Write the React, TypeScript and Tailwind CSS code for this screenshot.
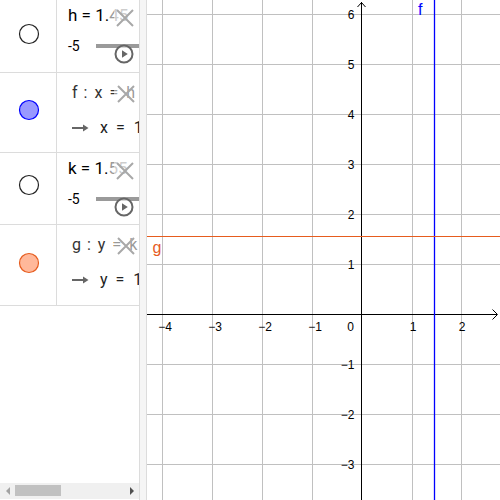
import React from "react";

const XIcon = () => (
  <svg width="20" height="20" viewBox="0 0 20 20" className="block">
    <path d="M2 2 L18 18 M18 2 L2 18" stroke="#a8a8a8" strokeWidth="2" fill="none" />
  </svg>
);

const PlayIcon = () => (
  <svg width="22" height="22" viewBox="0 0 22 22" className="block">
    <circle cx="11" cy="11" r="8.5" stroke="#666" strokeWidth="2" fill="white" fillOpacity="0.6" />
    <path d="M9 7.2 L14.8 11 L9 14.8 Z" fill="#666" />
  </svg>
);

function Marble({ fill, stroke }: { fill: string; stroke: string }) {
  return (
    <svg width="22" height="22" viewBox="0 0 22 22" className="block">
      <circle cx="11" cy="11" r="9.5" fill={fill} stroke={stroke} strokeWidth="1.2" />
    </svg>
  );
}

function SliderRow({ name, value, h, pt }: { name: string; value: string; h: string; pt: string }) {
  return (
    <div className={`flex border-b border-[#dcdcdc] ${h}`}>
      <div className={`w-[57px] shrink-0 border-r border-[#dcdcdc] flex justify-center ${pt}`}>
        <div className="ml-[1px]">
          <Marble fill="#ffffff" stroke="#222" />
        </div>
      </div>
      <div className="relative flex-1 overflow-hidden">
        <div className="pl-[11px] pt-[4px] text-[17px] leading-[23px] text-black whitespace-nowrap">
          {name} = 1.<span className="text-[#9a9a9a]">{value}</span>
        </div>
        <div className="flex items-center mt-[11px] h-[16px]">
          <div className="pl-[11px] w-[39px] shrink-0 text-[14px] leading-[16px] text-black">-5</div>
          <div className="flex-1 h-[4px] bg-[#9a9a9a]" />
        </div>
        <div className="absolute left-[57px] top-[8px] w-[25px] h-[20px] bg-white/50" />
        <div className="absolute left-[58px] top-[8px]">
          <XIcon />
        </div>
        <div className="absolute left-[56px] top-[43px]">
          <PlayIcon />
        </div>
      </div>
    </div>
  );
}

function LineRow({
  lhs,
  name,
  out,
  fill,
  stroke,
  h,
  pt,
}: {
  lhs: string;
  name: string;
  out: string;
  fill: string;
  stroke: string;
  h: string;
  pt: string;
}) {
  return (
    <div className={`flex border-b border-[#dcdcdc] ${h}`}>
      <div className={`w-[57px] shrink-0 border-r border-[#dcdcdc] flex justify-center ${pt}`}>
        <div className="ml-[1px]">
          <Marble fill={fill} stroke={stroke} />
        </div>
      </div>
      <div className="relative flex-1 overflow-hidden">
        <div className="pl-[15px] pt-[10px] text-[16px] leading-[20px] text-[#333] whitespace-nowrap">
          {name}
          <span className="ml-[6px]">:</span>
          <span className="ml-[7px]">{lhs}</span>
          <span className="ml-[7px]">=</span>
          <span className="ml-[8px]">{name === "f" ? "h" : "k"}</span>
        </div>
        <div className="flex items-center pl-[15px] mt-[15px] whitespace-nowrap">
          <svg width="17" height="8" viewBox="0 0 17 8" className="block shrink-0">
            <path d="M0 4 H13" stroke="#666" strokeWidth="2" />
            <path d="M11 0.5 L16.5 4 L11 7.5 Z" fill="#666" />
          </svg>
          <span className="ml-[11px] shrink-0 text-[16px] leading-[20px] text-[#222]">
            {lhs}
            <span className="ml-[8px]">=</span>
            <span className="ml-[9px]">{out}</span>
          </span>
        </div>
        <div className="absolute left-[57px] top-[10px] w-[25px] h-[20px] bg-white/50" />
        <div className="absolute left-[59px] top-[11px]">
          <XIcon />
        </div>
      </div>
    </div>
  );
}

function Graph() {
  const vx = [15, 65, 115, 165, 265, 314];
  const hy = [14, 64, 114, 164, 214, 264, 364, 414, 464];
  const xl: [number, string][] = [
    [18, "\u22124"],
    [68, "\u22123"],
    [118, "\u22122"],
    [168, "\u22121"],
    [266, "1"],
    [315, "2"],
  ];
  const yl: [number, string][] = [
    [14, "6"],
    [64, "5"],
    [114, "4"],
    [164, "3"],
    [214, "2"],
    [264, "1"],
    [364, "\u22121"],
    [414, "\u22122"],
    [464, "\u22123"],
  ];
  return (
    <svg width="353" height="500" viewBox="0 0 353 500" className="block">
      <rect width="353" height="500" fill="white" />
      {vx.map((x) => (
        <line key={"v" + x} x1={x + 0.5} y1={0} x2={x + 0.5} y2={500} stroke="#c0c0c0" strokeWidth="1" />
      ))}
      {hy.map((y) => (
        <line key={"h" + y} x1={0} y1={y + 0.5} x2={353} y2={y + 0.5} stroke="#c0c0c0" strokeWidth="1" />
      ))}
      <line x1={0} y1={314.5} x2={350} y2={314.5} stroke="#000" strokeWidth="1" />
      <line x1={214.5} y1={2} x2={214.5} y2={500} stroke="#000" strokeWidth="1" />
      <polyline points="345.5,309.5 350.5,314.5 345.5,319.5" fill="none" stroke="#000" strokeWidth="1" />
      <polyline points="210.5,7 214.5,2.5 218.5,7" fill="none" stroke="#000" strokeWidth="1" />
      <line x1={287.5} y1={0} x2={287.5} y2={500} stroke="#0000ff" strokeWidth="1.3" />
      <line x1={0} y1={236.5} x2={353} y2={236.5} stroke="#e65c1e" strokeWidth="1" />
      <g fontFamily="'Liberation Sans', Arial, sans-serif" fontSize="12" fill="#000">
        {xl.map(([x, t]) => (
          <text key={"xl" + t} x={x} y={331} textAnchor="middle">
            {t}
          </text>
        ))}
        <text x={207} y={331} textAnchor="end">
          0
        </text>
        {yl.map(([y, t]) => (
          <text key={"yl" + t} x={207.5} y={y + 4.8} textAnchor="end">
            {t}
          </text>
        ))}
      </g>
      <text x={271} y={15} fontFamily="'Liberation Sans', Arial, sans-serif" fontSize="16" fill="#0000ff">
        f
      </text>
      <text x={5.5} y={252.5} fontFamily="'Liberation Sans', Arial, sans-serif" fontSize="16" fill="#e65c1e">
        g
      </text>
    </svg>
  );
}

export default function App() {
  return (
    <div className="w-[500px] h-[500px] flex bg-white overflow-hidden font-['Roboto',sans-serif]">
      <div className="w-[140px] h-full shrink-0 flex flex-col border-r border-[#dcdcdc]">
        <SliderRow name="h" value="45" h="h-[73px]" pt="pt-[23px]" />
        <LineRow lhs="x" name="f" out="1.45" fill="#9999ff" stroke="#0000ff" h="h-[80px]" pt="pt-[26px]" />
        <SliderRow name="k" value="55" h="h-[72px]" pt="pt-[21px]" />
        <LineRow lhs="y" name="g" out="1.55" fill="#ffb89a" stroke="#e65c1e" h="h-[81px]" pt="pt-[27px]" />
        <div className="flex-1" />
        <div className="h-[16px] mb-[1px] bg-[#f0f0f0] flex items-center relative">
          <svg width="8" height="10" viewBox="0 0 8 10" className="absolute left-[4px] top-[3px]">
            <path d="M6 1 L2 5 L6 9 Z" fill="#a3a3a3" />
          </svg>
          <div className="absolute left-[15px] top-[2px] w-[46px] h-[11px] bg-[#c1c1c1]" />
          <svg width="8" height="10" viewBox="0 0 8 10" className="absolute left-[128px] top-[3px]">
            <path d="M2 1 L6 5 L2 9 Z" fill="#505050" />
          </svg>
        </div>
      </div>
      <div className="w-[7px] h-full shrink-0 bg-[#f5f5f5] border-r border-[#dcdcdc]" />
      <div className="flex-1 h-full">
        <Graph />
      </div>
    </div>
  );
}
